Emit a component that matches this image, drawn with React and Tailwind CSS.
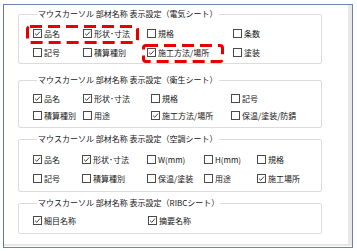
import React from "react";

const FONT = "font-['Noto_Sans_CJK_JP','Noto_Sans',sans-serif]";

function Box({ checked }) {
  return (
    <span className="w-[9px] h-[9px] border border-[#4a4a4a] bg-white flex items-center justify-center shrink-0">
      {checked && (
        <svg width="7" height="7" viewBox="0 0 7 7">
          <path d="M1 3.6 L2.8 5.3 L6 1.6" fill="none" stroke="#333" strokeWidth="0.9" />
        </svg>
      )}
    </span>
  );
}

function Item({ label, checked }) {
  return (
    <div className="flex items-center gap-[2px] whitespace-nowrap">
      <Box checked={checked} />
      <span>{label}</span>
    </div>
  );
}

function Group({ title, children, className }) {
  return (
    <fieldset className={"w-[304px] border border-[#dcdcdc] rounded-[2px] pl-[14px] " + className}>
      <legend className="ml-[4px] px-[1px] leading-[12px]">{title}</legend>
      {children}
    </fieldset>
  );
}

export default function App() {
  return (
    <div className={"w-[357px] h-[251px] bg-white relative overflow-hidden text-[8px] text-[#151515] " + FONT}>
      <div className="ml-[3px] mt-[4px] w-[350px] h-[244px] border border-[#6f84ad] border-l-[#5f78a8] flex flex-col">
        <div className="flex-1 flex">
          <div className="flex-1 flex flex-col pl-[14px]">
            <Group title="マウスカーソル 部材名称 表示設定（電気シート）" className="mt-[3px] pt-[4px] pb-[1px]">
              <div className="grid grid-cols-[50px_64px_86px_auto] h-[19px] items-center">
                <Item label="品名" checked />
                <Item label="形状･寸法" checked />
                <Item label="規格" />
                <Item label="条数" />
              </div>
              <div className="grid grid-cols-[50px_64px_86px_auto] h-[19px] items-center">
                <Item label="記号" />
                <Item label="積算種別" />
                <Item label="施工方法/場所" checked />
                <Item label="塗装" />
              </div>
            </Group>
            <Group title="マウスカーソル 部材名称 表示設定（衛生シート）" className="mt-[10px] pt-[4px] pb-[3px]">
              <div className="grid grid-cols-[50px_68px_80px_auto] h-[17px] items-center">
                <Item label="品名" checked />
                <Item label="形状･寸法" checked />
                <Item label="規格" />
                <Item label="記号" />
              </div>
              <div className="grid grid-cols-[50px_68px_80px_auto] h-[17px] items-center">
                <Item label="積算種別" />
                <Item label="用途" />
                <Item label="施工方法/場所" checked />
                <Item label="保温/塗装/防錆" />
              </div>
            </Group>
            <Group title="マウスカーソル 部材名称 表示設定（空調シート）" className="mt-[5px] pt-[5px] pb-[3px]">
              <div className="grid grid-cols-[49px_65px_57px_53px_auto] h-[19px] items-center">
                <Item label="品名" checked />
                <Item label="形状･寸法" checked />
                <Item label="W(mm)" />
                <Item label="H(mm)" />
                <Item label="規格" />
              </div>
              <div className="grid grid-cols-[49px_65px_57px_53px_auto] h-[19px] items-center">
                <Item label="記号" />
                <Item label="積算種別" />
                <Item label="保温/塗装" />
                <Item label="用途" />
                <Item label="施工場所" checked />
              </div>
            </Group>
            <Group title="マウスカーソル 部材名称 表示設定（RIBCシート）" className="mt-[5px] pt-[3px] pb-[4px]">
              <div className="grid grid-cols-[115px_auto] h-[17px] items-center">
                <Item label="細目名称" checked />
                <Item label="摘要名称" checked />
              </div>
            </Group>
          </div>
          <div className="w-[4px] bg-[#e8e8e8]" />
        </div>
        <div className="h-[2px] bg-[#e8e8e8]" />
        <div className="h-[1px] bg-white" />
      </div>
      <svg className="absolute left-0 top-0 pointer-events-none" width="357" height="251">
        <rect x="27.5" y="26.5" width="110" height="16" rx="2.5" fill="none" stroke="#e60000" strokeWidth="3" strokeDasharray="12 6" />
        <rect x="143.5" y="45.5" width="79" height="16" rx="2.5" fill="none" stroke="#e60000" strokeWidth="3" strokeDasharray="12 6" />
      </svg>
    </div>
  );
}
